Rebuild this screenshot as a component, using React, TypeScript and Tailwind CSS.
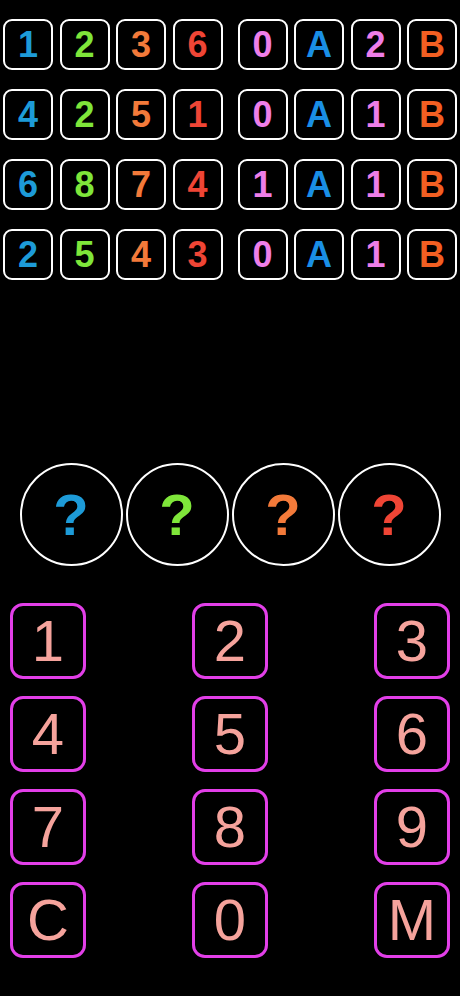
const guesses: { digits: string[]; result: [string, string] }[] = [
  { digits: ["1", "2", "3", "6"], result: ["0", "2"] },
  { digits: ["4", "2", "5", "1"], result: ["0", "1"] },
  { digits: ["6", "8", "7", "4"], result: ["1", "1"] },
  { digits: ["2", "5", "4", "3"], result: ["0", "1"] },
];

const digitColors = ["text-[#1d9bd8]", "text-[#7fe63a]", "text-[#f37a3a]", "text-[#ef4535]"];

const keys = ["1", "2", "3", "4", "5", "6", "7", "8", "9", "C", "0", "M"];

function Tile({ value, color }: { value: string; color: string }) {
  return (
    <div
      className={`flex h-[51px] w-[50px] items-center justify-center rounded-[9px] border-2 border-white text-[36px] font-bold leading-none ${color}`}
    >
      {value}
    </div>
  );
}

export default function App() {
  return (
    <div
      className="flex min-h-[996px] w-full flex-col bg-black"
      style={{ fontFamily: '"Liberation Sans", Arial, sans-serif' }}
    >
      {/* history */}
      <div className="flex flex-col gap-[19px] pt-[19px]">
        {guesses.map((g, i) => (
          <div key={i} className="flex justify-center gap-[15px]">
            <div className="flex gap-[6.5px]">
              {g.digits.map((d, j) => (
                <Tile key={j} value={d} color={digitColors[j]} />
              ))}
            </div>
            <div className="flex gap-[6.5px]">
              <Tile value={g.result[0]} color="text-[#ee7ee8]" />
              <Tile value="A" color="text-[#1a8fe6]" />
              <Tile value={g.result[1]} color="text-[#ee7ee8]" />
              <Tile value="B" color="text-[#f25f22]" />
            </div>
          </div>
        ))}
      </div>

      {/* current guess */}
      <div className="mt-[183px] flex justify-center gap-[3px]">
        {digitColors.map((c, i) => (
          <div
            key={i}
            className={`flex h-[103px] w-[103px] items-center justify-center rounded-full border-[2.5px] border-white text-[58px] font-bold leading-none ${c}`}
          >
            ?
          </div>
        ))}
      </div>

      {/* keypad */}
      <div className="mt-[37px] grid grid-cols-3 gap-y-[17px] px-[10px]">
        {keys.map((k, i) => (
          <div
            key={k}
            className={`flex ${i % 3 === 0 ? "justify-start" : i % 3 === 1 ? "justify-center" : "justify-end"}`}
          >
            <button className="flex h-[76px] w-[76px] items-center justify-center rounded-[13px] border-[3.5px] border-[#e23fe8] text-[58px] leading-none text-[#f5a39c]">
              {k}
            </button>
          </div>
        ))}
      </div>
    </div>
  );
}
